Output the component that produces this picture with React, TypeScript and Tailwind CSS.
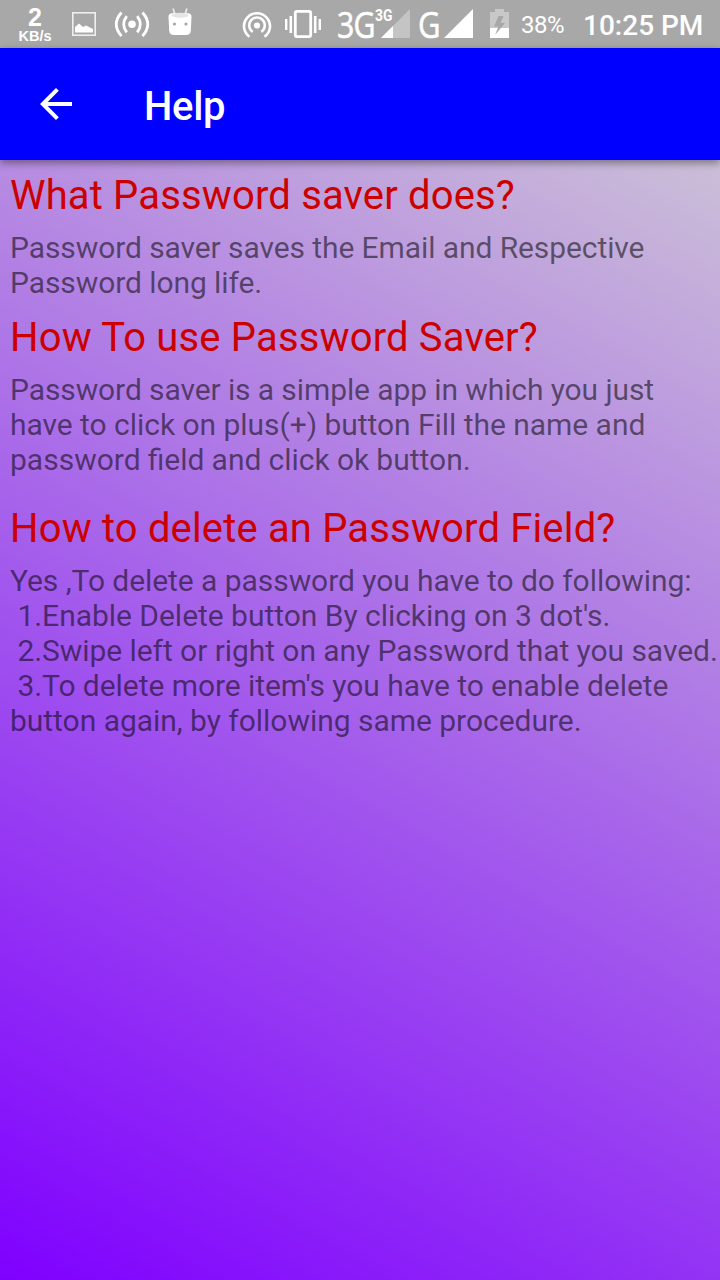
const sections = [
  {
    title: "What Password saver does?",
    gap: "mt-0",
    lines: [
      { text: "Password saver saves the Email and Respective", fit: "tracking-[-0.09px]" },
      { text: "Password long life.", fit: "tracking-[-0.08px]" },
    ],
  },
  {
    title: "How To use Password Saver?",
    gap: "mt-[14px]",
    lines: [
      { text: "Password saver is a simple app in which you just", fit: "tracking-[-0.1px]" },
      { text: "have to click on plus(+) button Fill the name and", fit: "tracking-[-0.04px]" },
      { text: "password field and click ok button.", fit: "[word-spacing:-0.3px]" },
    ],
  },
  {
    title: "How to delete an Password Field?",
    gap: "mt-[28px]",
    lines: [
      { text: "Yes ,To delete a password you have to do following:", fit: "tracking-[-0.06px]" },
      { text: " 1.Enable Delete button By clicking on 3 dot's.", fit: "tracking-[-0.03px]" },
      { text: " 2.Swipe left or right on any Password that you saved.", fit: "tracking-[-0.06px]" },
      { text: " 3.To delete more item's you have to enable delete", fit: "tracking-[-0.06px]" },
      { text: "button again, by following same procedure.", fit: "tracking-[-0.03px]" },
    ],
  },
];

function StatusBar() {
  return (
    <header className="flex h-12 shrink-0 items-start bg-[#a8a8a8] text-white">
      <div className="ml-[17px] mt-[5px] flex w-[36px] flex-col items-center font-['Liberation_Sans'] font-bold">
        <span className="text-[25px] leading-[24px]">2</span>
        <span className="text-[14.5px] leading-[14px]">KB/s</span>
      </div>
      <svg className="ml-[19px] mt-3 h-6 w-6" viewBox="0 0 24 24">
        <rect x="0.8" y="0.8" width="22.4" height="22.4" fill="none" stroke="#eee" strokeWidth="1.6" />
        <path d="M3 20.5V15L7 11.5L11 15L14 13.5L21 17V20.5Z" fill="white" />
      </svg>
      <svg className="ml-[18px] mt-[11px] h-[27px] w-[36px]" viewBox="0 0 36 27" fill="none" stroke="white" strokeWidth="2.8">
        <circle cx="18" cy="13.3" r="3.8" fill="white" stroke="none" />
        <path d="M12.8 5.2Q6.6 13.3 12.8 21.4M23.2 5.2Q29.4 13.3 23.2 21.4M7.5 1.5Q-3 13.3 7.5 25.1M28.5 1.5Q39 13.3 28.5 25.1" />
      </svg>
      <svg className="ml-[18px] mt-2 h-7 w-6" viewBox="0 0 24 28">
        <path d="M7 6L5 .5M17 6L19 .5" stroke="#eee" strokeWidth="1.6" />
        <path d="M.5 9Q0 5 6 5H18Q24 5 23.5 9L22.8 23Q22.4 27 18 27H6Q1.6 27 1.2 23Z" fill="white" />
        <ellipse cx="12" cy="7.2" rx="8.4" ry="2.5" fill="#e5e5e5" />
        <circle cx="6.5" cy="16" r="1.6" fill="#a8a8a8" />
        <circle cx="18" cy="16" r="1.6" fill="#a8a8a8" />
      </svg>
      <svg className="ml-[50px] mt-[11px] h-7 w-[30px]" viewBox="0 0 30 28" fill="none" stroke="white" strokeWidth="2.6">
        <circle cx="15" cy="14.5" r="3.1" fill="white" stroke="none" />
        <path d="M7.5 25.8A13 13 0 1 1 22.5 25.8M10.7 20.8A7.8 7.8 0 1 1 19.3 20.8" />
      </svg>
      <svg className="ml-[13px] mt-[10px] h-7 w-[36px]" viewBox="0 0 36 28" fill="none" stroke="white">
        <rect x="10.3" y="1.4" width="15.4" height="25.2" rx="1.6" strokeWidth="2.8" />
        <path d="M1.2 9V20M34.8 9V20" strokeWidth="2.4" />
        <path d="M5.8 6V23M30.2 6V23" strokeWidth="2.6" />
      </svg>
      <div className="relative ml-[16px] h-12 w-[74px]">
        <span className="absolute left-0 top-[4px] origin-left scale-x-[.84] font-['Open_Sans'] text-[36px] leading-[41px] tracking-[-1px] [-webkit-text-stroke:0.6px_white]">3G</span>
        <svg className="absolute left-[44px] top-[9px] h-[29px] w-[29px]" viewBox="0 0 29 29">
          <path d="M0 29L29 0V29Z" fill="#c4c4c4" />
          <path d="M0 29L12 17V29Z" fill="white" />
        </svg>
        <span className="absolute left-[38px] top-[7px] origin-left scale-x-[.87] font-[Roboto] text-[16px] font-bold leading-[18px]">3G</span>
      </div>
      <span className="ml-[7px] mt-[4px] w-[26px] origin-left scale-x-[.86] font-['Open_Sans'] text-[36px] leading-[41px] [-webkit-text-stroke:0.6px_white]">G</span>
      <svg className="mt-[9px] h-[29px] w-[29px]" viewBox="0 0 29 29"><path d="M0 29L29 0V29Z" fill="white" /></svg>
      <svg className="ml-[17px] mt-[9px] h-[29px] w-[19px]" viewBox="0 0 19 29">
        <path d="M5 0H14V3H19V29H0V3H5Z" fill="#c8c8c8" />
        <path d="M0 19H19V29H0Z" fill="white" />
        <path d="M13.5 7H8.5L4 17.5H8.5L5 26L15 14H10.5Z" fill="#a8a8a8" />
      </svg>
      <span className="ml-[12px] mt-[11px] w-[48px] whitespace-nowrap text-[24px] leading-7 tracking-[-.5px]">38%</span>
      <span className="ml-[14px] mt-[9px] whitespace-nowrap text-[28px] font-medium leading-[34px]">10:25 PM</span>
    </header>
  );
}

export default function App() {
  return (
    <div className="flex h-[1280px] w-[720px] flex-col overflow-hidden bg-[linear-gradient(29.36deg,#7f00ff,#d3d3d3)] font-[Roboto,sans-serif]">
      <StatusBar />
      <div className="flex h-28 shrink-0 items-center bg-[#0000ff] text-white shadow-[0_3px_8px_rgba(0,0,0,0.4)]">
        <svg className="ml-10 h-8 w-8" viewBox="0 0 32 32" fill="none" stroke="white" strokeWidth="4">
          <path d="M32 16H3M17.4 1.4L2.8 16L17.4 30.6" />
        </svg>
        <h1 className="ml-[72px] mt-1 text-[40px] font-medium leading-[47px] tracking-[-0.3px]">Help</h1>
      </div>
      <main className="flex grow flex-col pl-[10px] pt-[12px]">
        {sections.map((s) => (
          <section key={s.title} className={s.gap}>
            <h2 className="whitespace-nowrap text-[40px] leading-[47px] tracking-[0.16px] text-[#cc0000]">{s.title}</h2>
            <div className="mt-[11px] whitespace-pre text-[30px] leading-[35px] text-black/54">
              {s.lines.map((l) => (
                <p key={l.text} className={l.fit}>{l.text}</p>
              ))}
            </div>
          </section>
        ))}
      </main>
    </div>
  );
}
